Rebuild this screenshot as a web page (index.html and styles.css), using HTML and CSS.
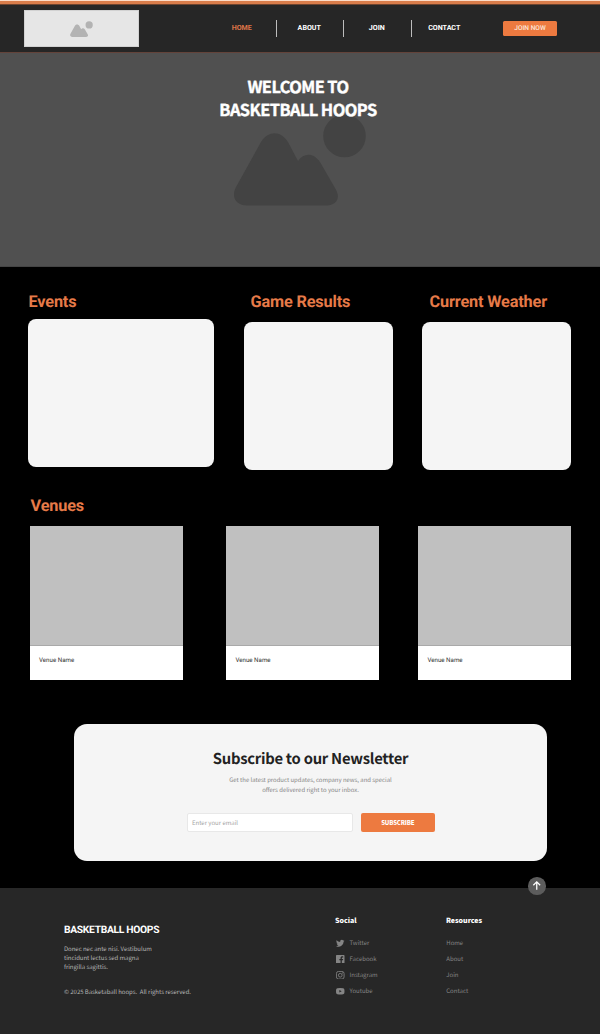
FILE: index.html
```html
<!DOCTYPE html>
<html lang="en">
<head>
<meta charset="utf-8">
<title>Basketball Hoops</title>
<link rel="stylesheet" href="styles.css">
</head>
<body>
<header class="header">
  <a class="logo" href="#" aria-label="Basketball Hoops">
    <svg class="logo-mark" viewBox="0 0 132 93"><circle cx="110.500" cy="23" r="21"/><path d="M27 29C35 17 47 18 54 29L64 48C70 39 80 40 86 49L101 75C108 86 101 92.500 93 92.500H13C1 92.500-3 83 2 74Z"/></svg>
  </a>
  <nav class="nav">
    <a class="active" href="#">HOME</a><a href="#">ABOUT</a><a href="#">JOIN</a><a href="#">CONTACT</a>
  </nav>
  <a class="join" href="#">JOIN NOW</a>
</header>
<section class="hero">
  <svg class="hero-art" viewBox="0 0 132 93"><circle cx="110.500" cy="23" r="21.300"/><path d="M27 29C35 17 47 18 54 29L64 48C70 39 80 40 86 49L101 75C108 86 101 92.500 93 92.500H13C1 92.500-3 83 2 74Z"/></svg>
  <h1>WELCOME TO<br>BASKETBALL HOOPS</h1>
</section>
<main>
  <section class="panels">
    <div class="panel events"><h2>Events</h2><div class="box"></div></div>
    <div class="panel"><h2>Game Results</h2><div class="box"></div></div>
    <div class="panel weather"><h2>Current Weather</h2><div class="box"></div></div>
  </section>
  <section class="venues">
    <h2>Venues</h2>
    <div class="venue-list">
      <article class="venue"><div class="photo"></div><p>Venue Name</p></article>
      <article class="venue"><div class="photo"></div><p>Venue Name</p></article>
      <article class="venue"><div class="photo"></div><p>Venue Name</p></article>
    </div>
  </section>
  <section class="newsletter">
    <h2>Subscribe to our Newsletter</h2>
    <p>Get the latest product updates, company news, and special<br>offers delivered right to your inbox.</p>
    <form class="signup"><div class="field">Enter your email</div><button type="button"><span>SUBSCRIBE</span></button></form>
  </section>
</main>
<footer class="footer">
  <a class="to-top" href="#" aria-label="Back to top"><svg viewBox="0 0 18 18"><path d="M9 13V5.300M5.500 8.500 9 5l3.500 3.500"/></svg></a>
  <div class="about">
    <h3>BASKETBALL HOOPS</h3>
    <p>Donec nec ante nisi. Vestibulum<br>tincidunt lectus sed magna<br>fringilla sagittis.</p>
    <p class="copy">© 2025 Basketaball hoops.&nbsp; All rights reserved.</p>
  </div>
  <div class="social">
    <h4>Social</h4>
    <a href="#"><svg viewBox="0 0 24 24"><path d="M24 4.600a10 10 0 0 1-2.800.8 5 5 0 0 0 2.200-2.700 10 10 0 0 1-3.100 1.200 4.900 4.900 0 0 0-8.400 4.500A14 14 0 0 1 1.700 3.200a4.900 4.900 0 0 0 1.500 6.500 5 5 0 0 1-2.200-.6 4.900 4.900 0 0 0 3.900 4.900 5 5 0 0 1-2.200.1 4.900 4.900 0 0 0 4.600 3.400A10 10 0 0 1 0 19.500 14 14 0 0 0 21.500 7a10 10 0 0 0 2.500-2.400Z"/></svg>Twitter</a>
    <a href="#"><svg viewBox="0 0 24 24"><path d="M2 0h20a2 2 0 0 1 2 2v20a2 2 0 0 1-2 2h-5.500v-9h3.200l.5-3.700h-3.700V9c0-1.100.4-1.800 1.900-1.800h2V3.900c-5-.7-7.600 1.100-7.600 4.700v2.700H9.500V15h3.300v9H2a2 2 0 0 1-2-2V2a2 2 0 0 1 2-2Z"/></svg>Facebook</a>
    <a href="#"><svg class="line" viewBox="0 0 24 24"><rect x="1.200" y="1.200" width="21.600" height="21.600" rx="6"/><circle cx="12" cy="12" r="5.200"/><circle cx="18.300" cy="5.700" r=".6"/></svg>Instagram</a>
    <a href="#"><svg viewBox="0 0 24 24"><path fill-rule="evenodd" d="M4 3.500Q12 2.500 20 3.500 23.500 4 23.700 8 24.200 12 23.700 16 23.500 20 20 20.500 12 21.500 4 20.500.5 20 .3 16-.2 12 .3 8 .5 4 4 3.500ZM9.500 8.300v7.400L16 12Z"/></svg>Youtube</a>
  </div>
  <div class="resources">
    <h4>Resources</h4>
    <a href="#">Home</a><a href="#">About</a><a href="#">Join</a><a href="#">Contact</a>
  </div>
</footer>
</body>
</html>
```
FILE: styles.css
```css
* { box-sizing: border-box; }
body { margin: 0; width: 600px; background: #000; font-family: Roboto, sans-serif; text-rendering: geometricPrecision; }
h1, h2, h3, h4, p { margin: 0; }
a { color: inherit; text-decoration: none; }

.header { display: flex; align-items: flex-start; height: 53px; padding: 6px 0 0 24px; background: linear-gradient(#fbdcc8 0 1px, #d97d4b 1px 4px, #70452f 4px 5px, #262626 5px 52px, #63433a 52px 53px); }
.logo { display: flex; width: 115px; height: 37px; margin-top: 4px; padding: 9.500px 0 0 45px; background: #e6e6e6; border: 1px solid #d2d2d2; }
.logo-mark { width: 23px; height: 16px; fill: #b3b3b3; }
.nav { display: grid; grid-template-columns: repeat(4, 67.500px); margin: 14px 0 0 69px; line-height: 16.500px; text-align: center; font-size: 7.100px; font-weight: 700; color: #fff; }
.nav a + a { background: linear-gradient(90deg, #bdbdbd 1.200px, transparent 1.200px); }
.nav .active { color: #dc7548; }
.join { width: 54px; height: 15px; margin: 15px 0 0 25px; border-radius: 1.500px; background: #ed7a40; color: #fbe6da; font-size: 6.600px; font-weight: 500; line-height: 15px; text-align: center; }

.hero { position: relative; height: 214px; padding-top: 22px; background: #505050; border-bottom: 1px solid #444; }
.hero-art { position: absolute; left: 234px; top: 60px; width: 132px; height: 93px; fill: #434343; }
.hero h1 { position: relative; width: 596px; text-align: center; color: #fff; font: 700 16.400px/22.500px "Noto Sans CJK JP", sans-serif; letter-spacing: -.57px; -webkit-text-stroke: .4px #fff; }

h2 { color: #e67a48; font-size: 16.300px; line-height: 20px; letter-spacing: -.16px; }
.panels { display: flex; padding: 25px 28px 0; gap: 29px; }
.panel { width: 149px; }
.panel h2 { padding-left: 6.500px; white-space: nowrap; }
.box { height: 147.500px; margin-top: 10px; background: #f5f5f5; border-radius: 8px; }
.events { width: 187px; }
.events h2 { padding-left: .5px; }
.events .box { width: 185.500px; margin-top: 7px; }
.weather h2 { padding-left: 7.500px; }
.venues { padding: 26px 29px 0 30px; }
.venues h2 { padding-left: .5px; }
.venue-list { display: grid; grid-template-columns: 196.400px 192px 152.500px; margin-top: 10px; }
.venue { width: 152.500px; height: 154.500px; background: #fff; }
.photo { height: 120.500px; background: #c0c0c0; border-bottom: 1px solid #a9a9a9; }
.venue p { padding: 8px 9px; font-size: 6.200px; line-height: 12px; color: #333; }

.newsletter { width: 473px; height: 137px; margin: 44px 0 27px 74px; padding-top: 24px; border-radius: 13px; background: #f5f5f5; text-align: center; font-family: "Noto Sans CJK JP", sans-serif; }
.newsletter h2 { color: #222; font-size: 14.800px; line-height: 22px; letter-spacing: -.26px; font-variant-ligatures: none; }
.newsletter p { margin-top: 4.500px; color: #858585; font-size: 5.950px; line-height: 10px; }
.signup { display: flex; gap: 8px; margin: 18px 0 0 113px; }
.field { width: 166px; height: 19px; padding-left: 4px; background: #fff; border: 1px solid #e8e8e8; border-radius: 2px; color: #a5a5a5; font-size: 6px; line-height: 17px; text-align: left; }
.signup button { width: 73.500px; height: 19px; padding: 0; border: 0; border-radius: 2px; background: #ed7a40; color: #fff; font: 900 6px/19px "Noto Sans CJK JP", sans-serif; letter-spacing: -.15px; }

.footer { position: relative; display: grid; grid-template-columns: 271px 111px 1fr; height: 146px; padding: 25px 0 0 64px; background: #272727; font-family: "Noto Sans CJK JP", sans-serif; }
.to-top { position: absolute; left: 528px; top: -11px; width: 17.500px; height: 17.500px; border-radius: 50%; background: #5c5c5c; }
.to-top svg { display: block; fill: none; stroke: #fff; stroke-width: 1.300; }
.about { padding-top: 9px; color: #b5b5b5; font-size: 6px; line-height: 9.200px; letter-spacing: -.03px; }
.about h3 { margin-bottom: 6px; color: #fff; font: 700 10.300px/16px Roboto, sans-serif; letter-spacing: -.32px; }
.about .copy { margin-top: 15px; }
.footer h4 { color: #fff; font-size: 7px; font-weight: 900; line-height: 16px; }
.social, .resources { color: #858585; font-size: 6px; line-height: 16px; }
.social a { display: flex; align-items: center; gap: 5px; height: 16px; padding-left: 1px; }
.social svg { width: 8.500px; height: 8.500px; fill: #858585; }
.social svg.line { fill: none; stroke: #858585; stroke-width: 2.400; }
.social h4 { margin-bottom: 6px; }
.resources h4 { margin-bottom: 6px; }
.resources a { display: block; padding-left: .3px; }
```
